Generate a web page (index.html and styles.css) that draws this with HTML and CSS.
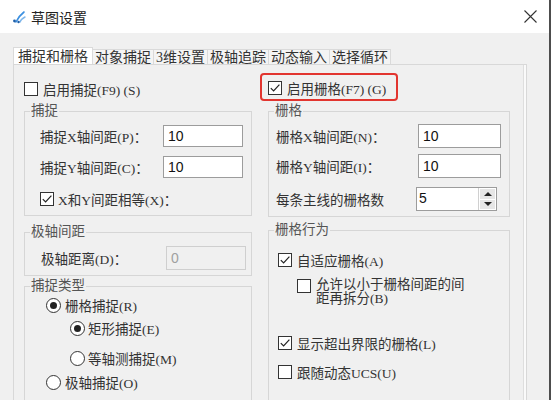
FILE: index.html
```html
<!DOCTYPE html>
<html lang="zh-CN">
<head>
  <meta charset="UTF-8">
  <title>草图设置</title>
  <link rel="stylesheet" href="styles.css">
</head>
<body>
<div class="window">
  <div class="titlebar">
    <svg class="app-icon" viewBox="0 0 14 14">
      <path d="M4 12 C6 8, 8 5, 12 2" fill="none" stroke="#3b8fe0" stroke-width="1.6" stroke-linecap="round"/>
      <path d="M8 12 C9 9, 11 8, 13 7" fill="none" stroke="#7fb6ea" stroke-width="1.4" stroke-linecap="round"/>
      <circle cx="2.5" cy="11" r="1.4" fill="#1d5ea8"/>
      <circle cx="6.5" cy="12" r="1.2" fill="#1d5ea8"/>
    </svg>
    <span class="title">草图设置</span>
    <svg class="close" viewBox="0 0 13 13">
      <path d="M0.5 0.5 L12.5 12.5 M12.5 0.5 L0.5 12.5" stroke="#333" stroke-width="1.1"/>
    </svg>
  </div>

  <div class="tabs">
    <div class="tab active">捕捉和栅格</div>
    <div class="tab">对象捕捉</div>
    <div class="tab">3维设置</div>
    <div class="tab">极轴追踪</div>
    <div class="tab">动态输入</div>
    <div class="tab">选择循环</div>
  </div>

  <div class="panel">
    <!-- left column -->
    <div class="col">
      <div class="check-line">
        <span class="cb"></span>启用捕捉(F9) (S)
      </div>

      <fieldset class="group g-snap">
        <legend>捕捉</legend>
        <div class="snap-body">
          <div class="field">
            <span class="lbl">捕捉X轴间距(P)：</span>
            <span class="input">10</span>
          </div>
          <div class="field">
            <span class="lbl">捕捉Y轴间距(C)：</span>
            <span class="input">10</span>
          </div>
          <div class="check-row">
            <span class="cb on"><svg viewBox="0 0 12 12"><path d="M1.8 6.2 L4.6 9 L10.4 2.6" fill="none" stroke="#222" stroke-width="1.2"/></svg></span>X和Y间距相等(X)：
          </div>
        </div>
      </fieldset>

      <fieldset class="group g-polar">
        <legend>极轴间距</legend>
        <div class="polar-body">
          <div class="field">
            <span class="lbl">极轴距离(D)：</span>
            <span class="input disabled">0</span>
          </div>
        </div>
      </fieldset>

      <fieldset class="group g-type">
        <legend>捕捉类型</legend>
        <div class="type-body">
          <div class="opt"><span class="rd on"></span>栅格捕捉(R)</div>
          <div class="opt sub first"><span class="rd on"></span>矩形捕捉(E)</div>
          <div class="opt sub second"><span class="rd"></span>等轴测捕捉(M)</div>
          <div class="opt last"><span class="rd"></span>极轴捕捉(O)</div>
        </div>
      </fieldset>
    </div>

    <!-- right column -->
    <div class="col">
      <div class="check-line highlight">
        <span class="cb on"><svg viewBox="0 0 12 12"><path d="M1.8 6.2 L4.6 9 L10.4 2.6" fill="none" stroke="#222" stroke-width="1.2"/></svg></span>启用栅格(F7) (G)
      </div>

      <fieldset class="group g-grid">
        <legend>栅格</legend>
        <div class="grid-body">
          <div class="field wide">
            <span class="lbl">栅格X轴间距(N)：</span>
            <span class="input">10</span>
          </div>
          <div class="field wide">
            <span class="lbl">栅格Y轴间距(I)：</span>
            <span class="input">10</span>
          </div>
          <div class="field wide spin-row">
            <span class="lbl">每条主线的栅格数</span>
            <span class="spin">
              <span class="val">5</span>
              <span class="btns"><span class="btn up"></span><span class="btn down"></span></span>
            </span>
          </div>
        </div>
      </fieldset>

      <fieldset class="group g-behave">
        <legend>栅格行为</legend>
        <div class="behave-body">
          <div class="check-row">
            <span class="cb on"><svg viewBox="0 0 12 12"><path d="M1.8 6.2 L4.6 9 L10.4 2.6" fill="none" stroke="#222" stroke-width="1.2"/></svg></span>自适应栅格(A)
          </div>
          <div class="check-row multi">
            <span class="cb"></span><span class="txt">允许以小于栅格间距的间<br>距再拆分(B)</span>
          </div>
          <div class="check-row gap-big">
            <span class="cb on"><svg viewBox="0 0 12 12"><path d="M1.8 6.2 L4.6 9 L10.4 2.6" fill="none" stroke="#222" stroke-width="1.2"/></svg></span>显示超出界限的栅格(L)
          </div>
          <div class="check-row gap-small">
            <span class="cb"></span>跟随动态UCS(U)
          </div>
        </div>
      </fieldset>
    </div>
  </div>
</div>
</body>
</html>
```

FILE: styles.css
```css
* {
  box-sizing: border-box;
}
body {
  margin: 0;
  width: 551px;
  height: 400px;
  overflow: hidden;
  background: #f0f0f0;
  font-family: "Liberation Serif", "Noto Sans CJK SC", serif;
  font-size: 13.5px;
  color: #333;
}
.window {
  height: 400px;
  border-right: 2px solid #4d4d4d;
}

/* title bar */
.titlebar {
  height: 33px;
  background: #fff;
  display: flex;
  align-items: center;
  padding: 0 12px 0 12px;
}
.app-icon {
  width: 14px;
  height: 14px;
}
.title {
  margin-left: 5px;
  font-family: "Noto Sans CJK SC", sans-serif;
  font-size: 14px;
  color: #222;
}
.close {
  margin-left: auto;
  width: 13px;
  height: 13px;
}

/* tabs */
.tabs {
  display: flex;
  align-items: flex-end;
  height: 17px;
  margin: 14px 0 0 13px;
}
.tab {
  height: 15px;
  line-height: 15px;
  padding: 0 2px;
  font-size: 14px;
  color: #333;
  background: #f4f4f4;
  border: 1px solid #dadada;
  border-bottom: none;
  margin-left: -1px;
}
.tab.active {
  height: 17px;
  line-height: 17px;
  margin-left: 0;
  padding: 0 4px;
  background: #fff;
}

/* panel */
.panel {
  margin-left: 13px;
  width: 514px;
  height: 336px;
  border: 1px solid #d8d8d8;
  border-bottom: none;
  box-shadow: inset -2px 0 0 #fafafa, inset -3px 0 0 #dedede;
  padding: 8px 0 0 10px;
  display: grid;
  grid-template-columns: 228px 242px;
  column-gap: 16px;
  align-items: start;
}
.col {
  display: flex;
  flex-direction: column;
}

.check-line {
  height: 28px;
  display: flex;
  align-items: center;
  gap: 5px;
  padding-top: 3px;
  color: #333;
}
.check-line.highlight {
  align-self: flex-start;
  margin-left: -8px;
  padding: 1px 10px 0 6px;
  border: 2px solid #e2352f;
  border-radius: 4px;
}

/* checkbox and radio */
.cb {
  flex: none;
  width: 14px;
  height: 14px;
  border: 1px solid #333;
  background: #fff;
  display: flex;
  align-items: center;
  justify-content: center;
}
.cb svg {
  width: 12px;
  height: 12px;
}
.rd {
  flex: none;
  width: 15px;
  height: 15px;
  border: 1px solid #333;
  border-radius: 50%;
  background: #fff;
  display: flex;
  align-items: center;
  justify-content: center;
}
.rd.on::after {
  content: "";
  width: 7px;
  height: 7px;
  border-radius: 50%;
  background: #222;
}

/* group boxes */
.group {
  margin: 0;
  padding: 0;
  min-width: 0;
  border: 1px solid #d6d6d6;
}
.group legend {
  margin-left: 5px;
  padding: 0 1px;
  line-height: 16px;
  color: #555;
}
.g-snap { margin-top: 2px; }
.g-polar { margin-top: 8px; }
.g-type { margin-top: 2px; }
.g-grid { margin-top: 2px; }
.g-behave { margin-top: 5px; }

.field {
  display: flex;
  align-items: center;
  height: 22px;
}
.field .lbl {
  flex: none;
  width: 123px;
}
.input {
  flex: none;
  width: 80px;
  height: 22px;
  display: flex;
  align-items: center;
  padding: 0 4px;
  border: 1px solid #9c9c9c;
  background: #fff;
  font-family: "Liberation Sans", sans-serif;
  font-size: 14px;
  color: #111;
}
.input.disabled {
  height: 24px;
  background: #f0f0f0;
  border-color: #cfcfcf;
  color: #a0a0a0;
}

.snap-body {
  display: flex;
  flex-direction: column;
  gap: 9px;
  padding: 6px 8px 6px 15px;
}
.check-row {
  display: flex;
  align-items: center;
  gap: 5px;
  height: 20px;
}
.snap-body .check-row {
  margin-top: 2px;
  gap: 4px;
}

.polar-body {
  padding: 6px 7px 5px 16px;
}
.polar-body .field {
  height: 24px;
}
.polar-body .lbl {
  width: 125px;
}

.type-body {
  padding: 1px 0 24px 21px;
}
.opt {
  display: flex;
  align-items: center;
  gap: 4px;
  height: 20px;
}
.opt.sub {
  margin-left: 24px;
  gap: 3px;
}
.opt.first { margin-top: 3px; }
.opt.second { margin-top: 10px; }
.opt.last { margin-top: 4px; }

/* grid group */
.grid-body {
  padding: 5px 8px 5px 7px;
}
.field.wide {
  height: 24px;
}
.field.wide + .field.wide {
  margin-top: 6px;
}
.field.wide .lbl {
  flex: 1;
  width: auto;
}
.field.wide .input {
  width: 83px;
  height: 24px;
}
.field.spin-row {
  margin-top: 9px !important;
}
.spin {
  display: flex;
  width: 81px;
  height: 24px;
  margin-right: 4px;
  border: 1px solid #9c9c9c;
  background: #fff;
}
.spin .val {
  flex: 1;
  padding: 2px 0 0 2px;
  font-family: "Liberation Sans", sans-serif;
  font-size: 14px;
  color: #111;
}
.spin .btns {
  width: 18px;
  display: flex;
  flex-direction: column;
  gap: 1px;
  padding: 1px;
  background: #fff;
  border-left: 1px solid #d0d0d0;
}
.spin .btn {
  flex: 1;
  background: #e6e6e6;
  display: flex;
  align-items: center;
  justify-content: center;
}
.spin .btn::after {
  content: "";
  border-left: 4px solid transparent;
  border-right: 4px solid transparent;
}
.spin .up::after {
  border-bottom: 4px solid #222;
}
.spin .down::after {
  border-top: 4px solid #222;
}

/* grid behaviour group */
.behave-body {
  padding: 12px 8px 30px 9px;
}
.check-row.multi {
  height: auto;
  align-items: flex-start;
  margin: 8px 0 0 19px;
}
.check-row.multi .cb {
  margin-top: 1px;
}
.check-row.multi .txt {
  line-height: 14px;
}
.check-row.gap-big { margin-top: 27px; }
.check-row.gap-small { margin-top: 9px; }
```
